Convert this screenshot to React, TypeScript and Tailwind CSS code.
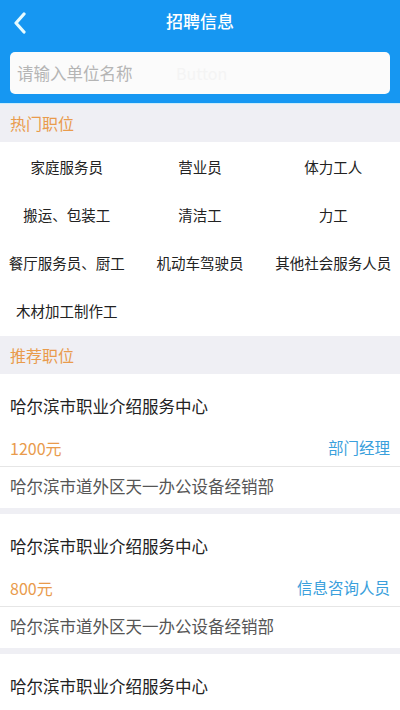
const hotJobs = [
  "家庭服务员",
  "营业员",
  "体力工人",
  "搬运、包装工",
  "清洁工",
  "力工",
  "餐厅服务员、厨工",
  "机动车驾驶员",
  "其他社会服务人员",
  "木材加工制作工",
];

const jobs = [
  {
    company: "哈尔滨市职业介绍服务中心",
    salary: "1200元",
    title: "部门经理",
    employer: "哈尔滨市道外区天一办公设备经销部",
  },
  {
    company: "哈尔滨市职业介绍服务中心",
    salary: "800元",
    title: "信息咨询人员",
    employer: "哈尔滨市道外区天一办公设备经销部",
  },
  {
    company: "哈尔滨市职业介绍服务中心",
    salary: "1000元",
    title: "营业员",
    employer: "哈尔滨市道外区天一办公设备经销部",
  },
];

function SectionTitle({ children }: { children: string }) {
  return (
    <div className="flex h-[38px] items-center bg-[#efeff4] px-[10px] text-[16px] text-[#e99b4c]">
      {children}
    </div>
  );
}

export default function App() {
  return (
    <div
      className="h-[710px] w-[400px] overflow-hidden bg-[#efeff4]"
      style={{ fontFamily: '"Noto Sans CJK SC", "Noto Sans", sans-serif' }}
    >
      {/* top bar */}
      <header className="relative flex h-[42px] items-center justify-center bg-[#1697f2]">
        <button type="button" className="absolute left-[11px] top-[10px] p-[2px]">
          <svg width="14" height="22" viewBox="0 0 14 22" fill="none">
            <path
              d="M11 2 L3 11 L11 20"
              stroke="#e6fbff"
              strokeWidth="3.2"
              strokeLinecap="round"
              strokeLinejoin="round"
            />
          </svg>
        </button>
        <h1 className="text-[17px] font-medium text-white">招聘信息</h1>
      </header>

      {/* search */}
      <div className="bg-[#1697f2] px-[10px] pb-[9px] pt-[10px]">
        <div className="relative flex h-[42px] items-center rounded-[5px] bg-[#fbfbfb] px-[7px]">
          <span className="text-[16.5px] text-[#b5b5b5]">请输入单位名称</span>
          <span className="absolute left-[166px] text-[16px] text-[#f4f4f4]">Button</span>
        </div>
      </div>
      <div className="h-px bg-[#c9ecfb]" />

      <SectionTitle>热门职位</SectionTitle>
      <div className="grid grid-cols-3 bg-white pb-px pt-px">
        {hotJobs.map((j) => (
          <div
            key={j}
            className="flex h-[48px] items-center justify-center whitespace-nowrap text-[14.5px] text-[#222]"
          >
            {j}
          </div>
        ))}
      </div>

      <SectionTitle>推荐职位</SectionTitle>
      <div className="flex flex-col gap-[6px]">
        {jobs.map((job, i) => (
          <div key={i} className="bg-white">
            <div className="px-[10px] pt-[20px] text-[16.5px] text-[#222]">{job.company}</div>
            <div className="flex items-center justify-between px-[10px] pb-[6px] pt-[17px]">
              <span className="text-[16px] text-[#e99b4c]">{job.salary}</span>
              <span className="text-[15.5px] text-[#3aa0dc]">{job.title}</span>
            </div>
            <div className="h-px bg-[#e6e6e6]" />
            <div className="flex h-[41px] items-center px-[10px] pb-[1px] text-[16.5px] text-[#555]">
              {job.employer}
            </div>
          </div>
        ))}
      </div>
    </div>
  );
}
